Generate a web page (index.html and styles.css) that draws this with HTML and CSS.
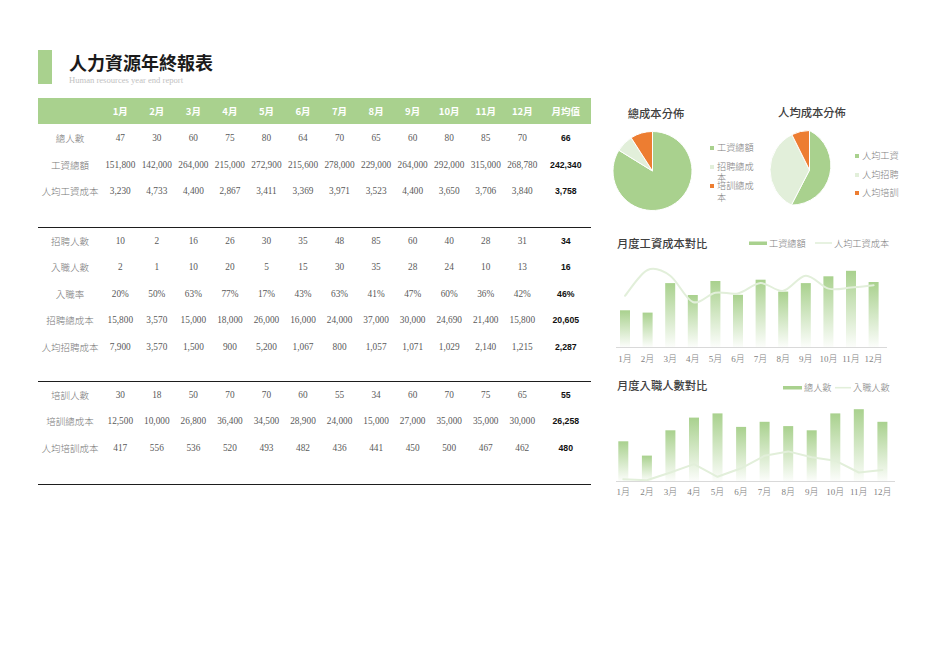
FILE: index.html
```html
<!DOCTYPE html>
<html lang="zh-Hant">
<head>
<meta charset="utf-8">
<title>人力資源年終報表</title>
<link rel="stylesheet" href="styles.css">
</head>
<body>
<div class="page">
  <header class="head">
    <div class="head-bar"></div>
    <div class="head-text">
      <h1 class="title">人力資源年終報表</h1>
      <p class="subtitle">Human resources year end report</p>
    </div>
  </header>

  <div class="main">
    <table class="report">
      <colgroup>
        <col class="c-label">
        <col class="c-m"><col class="c-m"><col class="c-m"><col class="c-m"><col class="c-m"><col class="c-m">
        <col class="c-m"><col class="c-m"><col class="c-m"><col class="c-m"><col class="c-m"><col class="c-m">
        <col class="c-avg">
      </colgroup>
      <thead>
        <tr><th></th><th>1月</th><th>2月</th><th>3月</th><th>4月</th><th>5月</th><th>6月</th><th>7月</th><th>8月</th><th>9月</th><th>10月</th><th>11月</th><th>12月</th><th>月均值</th></tr>
      </thead>
      <tbody>
        <tr><td class="lbl">總人數</td><td>47</td><td>30</td><td>60</td><td>75</td><td>80</td><td>64</td><td>70</td><td>65</td><td>60</td><td>80</td><td>85</td><td>70</td><td class="avg">66</td></tr>
        <tr><td class="lbl">工資總額</td><td>151,800</td><td>142,000</td><td>264,000</td><td>215,000</td><td>272,900</td><td>215,600</td><td>278,000</td><td>229,000</td><td>264,000</td><td>292,000</td><td>315,000</td><td>268,780</td><td class="avg">242,340</td></tr>
        <tr><td class="lbl">人均工資成本</td><td>3,230</td><td>4,733</td><td>4,400</td><td>2,867</td><td>3,411</td><td>3,369</td><td>3,971</td><td>3,523</td><td>4,400</td><td>3,650</td><td>3,706</td><td>3,840</td><td class="avg">3,758</td></tr>
        <tr class="sep"><td colspan="14"><div class="rule r1"></div></td></tr>
        <tr><td class="lbl">招聘人數</td><td>10</td><td>2</td><td>16</td><td>26</td><td>30</td><td>35</td><td>48</td><td>85</td><td>60</td><td>40</td><td>28</td><td>31</td><td class="avg">34</td></tr>
        <tr><td class="lbl">入職人數</td><td>2</td><td>1</td><td>10</td><td>20</td><td>5</td><td>15</td><td>30</td><td>35</td><td>28</td><td>24</td><td>10</td><td>13</td><td class="avg">16</td></tr>
        <tr><td class="lbl">入職率</td><td>20%</td><td>50%</td><td>63%</td><td>77%</td><td>17%</td><td>43%</td><td>63%</td><td>41%</td><td>47%</td><td>60%</td><td>36%</td><td>42%</td><td class="avg">46%</td></tr>
        <tr><td class="lbl">招聘總成本</td><td>15,800</td><td>3,570</td><td>15,000</td><td>18,000</td><td>26,000</td><td>16,000</td><td>24,000</td><td>37,000</td><td>30,000</td><td>24,690</td><td>21,400</td><td>15,800</td><td class="avg">20,605</td></tr>
        <tr><td class="lbl">人均招聘成本</td><td>7,900</td><td>3,570</td><td>1,500</td><td>900</td><td>5,200</td><td>1,067</td><td>800</td><td>1,057</td><td>1,071</td><td>1,029</td><td>2,140</td><td>1,215</td><td class="avg">2,287</td></tr>
        <tr class="sep"><td colspan="14"><div class="rule r2"></div></td></tr>
        <tr><td class="lbl">培訓人數</td><td>30</td><td>18</td><td>50</td><td>70</td><td>70</td><td>60</td><td>55</td><td>34</td><td>60</td><td>70</td><td>75</td><td>65</td><td class="avg">55</td></tr>
        <tr><td class="lbl">培訓總成本</td><td>12,500</td><td>10,000</td><td>26,800</td><td>36,400</td><td>34,500</td><td>28,900</td><td>24,000</td><td>15,000</td><td>27,000</td><td>35,000</td><td>35,000</td><td>30,000</td><td class="avg">26,258</td></tr>
        <tr><td class="lbl">人均培訓成本</td><td>417</td><td>556</td><td>536</td><td>520</td><td>493</td><td>482</td><td>436</td><td>441</td><td>450</td><td>500</td><td>467</td><td>462</td><td class="avg">480</td></tr>
        <tr class="sep"><td colspan="14"><div class="rule r3"></div></td></tr>
      </tbody>
    </table>

    <div class="charts">
      <div class="pies">
        <svg class="pie" width="150" height="132" viewBox="605 98 150 132">
          <text class="ct" x="656" y="117.5" text-anchor="middle">總成本分佈</text>
          <path class="s-green" d="M652.5,171 L652.5,131.5 A39.5,39.5 0 1 1 618.88,150.26 Z"/>
          <path class="s-light" d="M652.5,171 L618.88,150.26 A39.5,39.5 0 0 1 631.17,137.75 Z"/>
          <path class="s-orange" d="M652.5,171 L631.17,137.75 A39.5,39.5 0 0 1 652.5,131.5 Z"/>
          <rect class="m-green" x="710" y="146" width="4" height="4"/>
          <text class="lg" x="717" y="151.3">工資總額</text>
          <rect class="m-light" x="710" y="165" width="4" height="4"/>
          <text class="lg" x="717" y="170.3">招聘總成</text>
          <text class="lg" x="717" y="180.5">本</text>
          <rect class="m-orange" x="710" y="184" width="4" height="4"/>
          <text class="lg" x="717" y="189.3">培訓總成</text>
          <text class="lg" x="717" y="200.5">本</text>
        </svg>
        <svg class="pie" width="150" height="132" viewBox="755 98 150 132">
          <text class="ct" x="812" y="116.5" text-anchor="middle">人均成本分佈</text>
          <path class="s-green" d="M809.5,170 L809.5,130.5 A39.5,39.5 0 0 1 791.36,205.09 Z"/>
          <path class="s-light" d="M809.5,170 L791.36,205.09 A39.5,39.5 0 0 1 791.89,134.64 Z"/>
          <path class="s-orange" d="M809.5,170 L791.89,134.64 A39.5,39.5 0 0 1 809.5,130.5 Z"/>
          <rect class="m-green" x="855" y="154" width="4" height="4"/>
          <text class="lg" x="862" y="159.3">人均工資</text>
          <rect class="m-light" x="855" y="173" width="4" height="4"/>
          <text class="lg" x="862" y="178.3">人均招聘</text>
          <rect class="m-orange" x="855" y="191" width="4" height="4"/>
          <text class="lg" x="862" y="196.3">人均培訓</text>
        </svg>
      </div>

      <svg class="chart" width="300" height="140" viewBox="605 230 300 140">
        <defs>
          <linearGradient id="barGrad" x1="0" y1="0" x2="0" y2="1">
            <stop offset="0" stop-color="#a9d18e"/>
            <stop offset="1" stop-color="#a9d18e" stop-opacity="0.04"/>
          </linearGradient>
        </defs>
        <text class="ct" x="617" y="247.5">月度工資成本對比</text>
        <rect class="m-green" x="749" y="241.5" width="18" height="3.5"/>
        <text class="lg" x="769" y="246.5">工資總額</text>
        <line class="lg-line" x1="815" y1="243" x2="832" y2="243"/>
        <text class="lg" x="834" y="246.5">人均工資成本</text>
        <line class="axis" x1="616" y1="347.5" x2="887" y2="347.5"/>
        <g fill="url(#barGrad)">
          <rect x="620" y="310.3" width="10" height="36.7"/>
          <rect x="642.6" y="312.6" width="10" height="34.4"/>
          <rect x="665.2" y="283.1" width="10" height="63.9"/>
          <rect x="687.8" y="295" width="10" height="52"/>
          <rect x="710.4" y="281" width="10" height="66"/>
          <rect x="733" y="294.8" width="10" height="52.2"/>
          <rect x="755.6" y="279.7" width="10" height="67.3"/>
          <rect x="778.2" y="291.6" width="10" height="55.4"/>
          <rect x="800.8" y="283.1" width="10" height="63.9"/>
          <rect x="823.4" y="276.3" width="10" height="70.7"/>
          <rect x="846" y="270.8" width="10" height="76.2"/>
          <rect x="868.6" y="282" width="10" height="65"/>
        </g>
        <path class="trend" d="M625,295.8 C628.8,291.5 640.1,273.35 647.6,270 C655.1,266.65 662.7,270.4 670.2,275.7 C677.7,281.03 685.3,299.17 692.8,302 C700.3,304.83 707.9,294.13 715.4,292.7 C722.9,291.27 730.5,295 738,293.4 C745.5,291.8 753.1,283.53 760.6,283.1 C768.1,282.67 775.7,292.03 783.2,290.8 C790.7,289.57 798.3,276.07 805.8,275.7 C813.3,275.33 820.9,286.62 828.4,288.6 C835.9,290.58 843.5,288.15 851,287.6 C858.5,287.05 869.8,285.68 873.6,285.3"/>
        <g class="ax" text-anchor="middle">
          <text x="625" y="361.5">1月</text>
          <text x="647.6" y="361.5">2月</text>
          <text x="670.2" y="361.5">3月</text>
          <text x="692.8" y="361.5">4月</text>
          <text x="715.4" y="361.5">5月</text>
          <text x="738" y="361.5">6月</text>
          <text x="760.6" y="361.5">7月</text>
          <text x="783.2" y="361.5">8月</text>
          <text x="805.8" y="361.5">9月</text>
          <text x="828.4" y="361.5">10月</text>
          <text x="851" y="361.5">11月</text>
          <text x="873.6" y="361.5">12月</text>
        </g>
      </svg>

      <svg class="chart" width="300" height="138" viewBox="605 370 300 138">
        <text class="ct" x="617" y="389.5">月度入職人數對比</text>
        <rect class="m-green" x="783" y="386" width="19" height="3.5"/>
        <text class="lg" x="804" y="391">總人數</text>
        <line class="lg-line" x1="835" y1="387.7" x2="851" y2="387.7"/>
        <text class="lg" x="853" y="391">入職人數</text>
        <line class="axis" x1="616" y1="481.5" x2="895" y2="481.5"/>
        <g fill="url(#barGrad)">
          <rect x="618.3" y="441.3" width="10" height="39.7"/>
          <rect x="641.9" y="455.6" width="10" height="25.4"/>
          <rect x="665.4" y="430.3" width="10" height="50.7"/>
          <rect x="689" y="417.6" width="10" height="63.4"/>
          <rect x="712.5" y="413.4" width="10" height="67.6"/>
          <rect x="736.1" y="426.9" width="10" height="54.1"/>
          <rect x="759.6" y="421.8" width="10" height="59.2"/>
          <rect x="783.2" y="426.1" width="10" height="54.9"/>
          <rect x="806.7" y="430.3" width="10" height="50.7"/>
          <rect x="830.3" y="413.4" width="10" height="67.6"/>
          <rect x="853.8" y="409.2" width="10" height="71.8"/>
          <rect x="877.4" y="421.8" width="10" height="59.2"/>
        </g>
        <polyline class="trend" points="623.3,479.3 646.9,480.2 670.4,472.5 694,464.1 717.5,476.8 741.1,468.3 764.6,455.7 788.2,451.4 811.7,457.3 835.3,460.7 858.8,472.5 882.4,470"/>
        <g class="ax" text-anchor="middle">
          <text x="623.3" y="495">1月</text>
          <text x="646.9" y="495">2月</text>
          <text x="670.4" y="495">3月</text>
          <text x="694" y="495">4月</text>
          <text x="717.5" y="495">5月</text>
          <text x="741.1" y="495">6月</text>
          <text x="764.6" y="495">7月</text>
          <text x="788.2" y="495">8月</text>
          <text x="811.7" y="495">9月</text>
          <text x="835.3" y="495">10月</text>
          <text x="858.8" y="495">11月</text>
          <text x="882.4" y="495">12月</text>
        </g>
      </svg>
    </div>
  </div>
</div>
</body>
</html>
```

FILE: styles.css
```css
html, body {
  margin: 0;
  padding: 0;
  background: #ffffff;
}

body {
  font-family: "Liberation Serif", "Noto Sans CJK TC", serif;
  color: #555555;
}

.page {
  padding: 50px 0 0 38px;
}

/* ---------- header ---------- */
.head {
  display: flex;
  align-items: flex-start;
  height: 34px;
}

.head-bar {
  width: 14px;
  height: 34px;
  background: #a9d18e;
  flex: none;
}

.head-text {
  margin-left: 17px;
}

.title {
  margin: 0;
  font-family: "Noto Sans CJK TC", "Noto Sans CJK SC", sans-serif;
  font-weight: 700;
  font-size: 18px;
  line-height: 24px;
  color: #1a1a1a;
}

.subtitle {
  margin: 0;
  font-family: "Liberation Serif", serif;
  font-size: 8.6px;
  line-height: 13px;
  color: #c2c2c2;
}

/* ---------- layout ---------- */
.main {
  display: flex;
  align-items: flex-start;
  margin-top: 14px;
}

/* ---------- table ---------- */
.report {
  width: 553px;
  table-layout: fixed;
  border-collapse: separate;
  border-spacing: 0;
  flex: none;
}

.c-label { width: 64px; }
.c-m { width: 36.55px; }
.c-avg { width: 50.4px; }

.report th {
  height: 26px;
  padding: 0;
  background: #a9d18e;
  color: #ffffff;
  font-family: "Noto Sans CJK TC", "Noto Sans CJK SC", sans-serif;
  font-weight: 700;
  font-size: 9.5px;
  text-align: center;
  white-space: nowrap;
}

.report td {
  height: 26.5px;
  padding: 0;
  text-align: center;
  vertical-align: middle;
  font-family: "Liberation Serif", "Noto Sans CJK TC", serif;
  font-size: 9.3px;
  color: #595959;
  white-space: nowrap;
}

.report tbody tr:first-child td {
  padding-top: 1px;
}

.report td.lbl {
  font-family: "Liberation Serif", "Noto Sans CJK TC", serif;
  font-size: 9.5px;
  font-weight: 300;
  color: #777777;
}

.report td.avg {
  font-family: "Liberation Sans", "Noto Sans CJK TC", sans-serif;
  font-weight: 700;
  font-size: 8.7px;
  color: #111111;
}

.report tr.sep td {
  height: auto;
  padding-top: 0;
}

.rule {
  border-bottom: 1px solid #1e1e1e;
}

.r1 { height: 22px; }
.r2 { height: 20.5px; }
.r3 { height: 22.5px; }

/* ---------- charts ---------- */
.charts {
  margin-left: 14px;
  width: 300px;
  display: flex;
  flex-direction: column;
  flex: none;
}

.pies {
  display: flex;
}

.pie,
.chart {
  display: block;
  overflow: visible;
}

.ct {
  font-family: "Noto Sans CJK TC", "Noto Sans CJK SC", sans-serif;
  font-size: 11.3px;
  font-weight: 500;
  fill: #404040;
}

.lg {
  font-family: "Liberation Serif", "Noto Sans CJK TC", serif;
  font-size: 9.2px;
  font-weight: 300;
  fill: #808080;
}

.ax {
  font-family: "Liberation Serif", "Noto Sans CJK TC", serif;
  font-size: 9px;
  font-weight: 300;
  fill: #7f7f7f;
}

.s-green,
.s-light,
.s-orange {
  stroke: #ffffff;
  stroke-width: 1;
  stroke-linejoin: round;
}

.s-green { fill: #a9d18e; }
.s-light { fill: #e2efda; }
.s-orange { fill: #ed7d31; }

.m-green { fill: #a9d18e; }
.m-light { fill: #e2efda; }
.m-orange { fill: #ed7d31; }

.lg-line {
  stroke: #e2efda;
  stroke-width: 1.6;
}

.axis {
  stroke: #d9d9d9;
  stroke-width: 1;
}

.trend {
  fill: none;
  stroke: #e2efda;
  stroke-width: 2;
  stroke-linejoin: round;
  stroke-linecap: round;
}
```
